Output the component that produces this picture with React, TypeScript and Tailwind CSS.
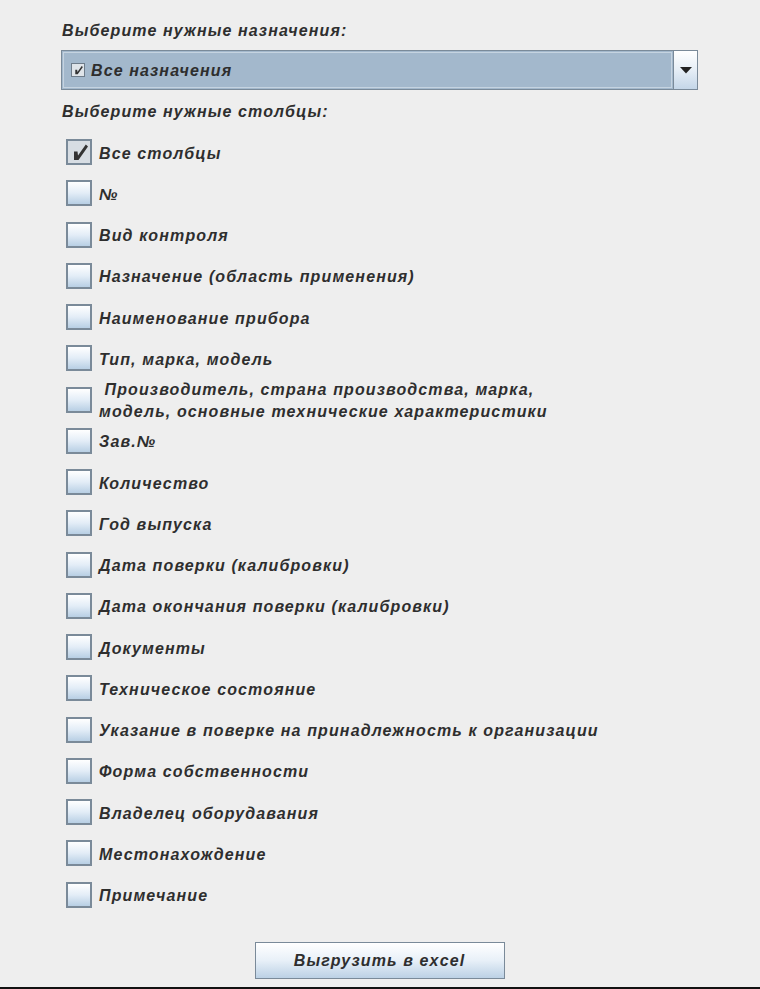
import React, { useState } from "react";

const columns = [
  "Все столбцы",
  "№",
  "Вид контроля",
  "Назначение (область применения)",
  "Наименование прибора",
  "Тип, марка, модель",
  " Производитель, страна производства, марка,\nмодель, основные технические характеристики",
  "Зав.№",
  "Количество",
  "Год выпуска",
  "Дата поверки (калибровки)",
  "Дата окончания поверки (калибровки)",
  "Документы",
  "Техническое состояние",
  "Указание в поверке на принадлежность к организации",
  "Форма собственности",
  "Владелец оборудавания",
  "Местонахождение",
  "Примечание",
];

const textCls =
  "font-['Liberation_Sans',Arial,sans-serif] font-bold italic text-[16px] tracking-[1.12px] text-[#2e2e2e]";

function Check({ size }: { size: number }) {
  return (
    <svg width={size} height={size} viewBox="2 2 22 22" className="block">
      <path d="M8 12.5 L11.5 12.5 L12 16.5 L19.8 5.5 L22 7.5 L12.5 21 L8 21 Z" fill="#333333" />
    </svg>
  );
}

function Box({ checked, onClick }: { checked: boolean; onClick: () => void }) {
  return (
    <button
      onClick={onClick}
      className={
        "w-[26px] h-[26px] shrink-0 border-2 border-[#7a8a99] flex items-center justify-center " +
        (checked
          ? "bg-[#d7dde3]"
          : "bg-gradient-to-b from-[#ffffff] via-[#e3edf7] to-[#b8cfe4]")
      }
    >
      {checked && <Check size={22} />}
    </button>
  );
}

export default function App() {
  const [checked, setChecked] = useState<boolean[]>(columns.map((_, i) => i === 0));

  return (
    <div className="w-[760px] h-[989px] bg-[#eeeeee] border-b-2 border-[#111111] flex flex-col pl-[61px] pr-[62px] pt-[21px] overflow-hidden">
      <div className={textCls + " leading-[20px] pl-[1px]"}>Выберите нужные назначения:</div>

      {/* Combo */}
      <div className="mt-[9px] h-[40px] flex border border-[#7a8a99] bg-[#a3b8cc]">
        <div className="flex-1 flex items-center gap-[6px] pl-[7px] border border-[#c5d3e0] m-[1px]">
          <div className="w-[14px] h-[14px] border border-[#6e7c8a] bg-[#dfe4e9] flex items-center justify-center">
            <Check size={12} />
          </div>
          <span className={textCls + " pt-[1px]"}>Все назначения</span>
        </div>
        <div className="w-[24px] flex items-center justify-center border-l border-[#7a8a99] bg-gradient-to-b from-[#ffffff] via-[#e6eef6] to-[#c4d6e8]">
          <svg width="12" height="7" viewBox="0 0 12 7">
            <path d="M0 0 H12 L6 6.5 Z" fill="#222222" />
          </svg>
        </div>
      </div>

      <div className={textCls + " h-[41.5px] flex items-center pl-[1px] pt-[3px]"}>Выберите нужные столбцы:</div>

      <div className="flex flex-col">
        {columns.map((c, i) => (
          <div key={i} className="h-[41.25px] flex items-center gap-[7px] pl-[5px]">
            <Box
              checked={checked[i]}
              onClick={() =>
                setChecked((p) =>
                  i === 0 ? p.map(() => !p[0]) : p.map((v, j) => (j === i ? !v : v))
                )
              }
            />
            <span className={textCls + " whitespace-pre leading-[22px] pt-[3px]"}>{c}</span>
          </div>
        ))}
      </div>

      <div className="flex justify-center mt-[27px]">
        <button
          className={
            textCls +
            " w-[250px] h-[37px] border border-[#7a8a99] bg-gradient-to-b from-[#ffffff] via-[#e8f0f8] to-[#bcd1e5]"
          }
        >
          Выгрузить в excel
        </button>
      </div>
    </div>
  );
}
